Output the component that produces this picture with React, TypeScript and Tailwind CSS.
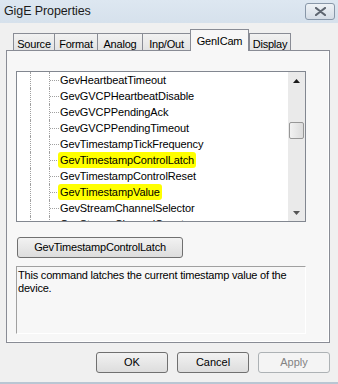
import React from "react";

const rows: { t: string; hl?: boolean }[] = [
  { t: "GevHeartbeatTimeout" },
  { t: "GevGVCPHeartbeatDisable" },
  { t: "GevGVCPPendingAck" },
  { t: "GevGVCPPendingTimeout" },
  { t: "GevTimestampTickFrequency" },
  { t: "GevTimestampControlLatch", hl: true },
  { t: "GevTimestampControlReset" },
  { t: "GevTimestampValue", hl: true },
  { t: "GevStreamChannelSelector" },
  { t: "GevStreamChannelCount" },
];

const tabs = [
  { t: "Source", w: "w-[41px]" },
  { t: "Format", w: "w-[43px]" },
  { t: "Analog", w: "w-[45px]" },
  { t: "Inp/Out", w: "w-[48px]" },
  { t: "GenICam", w: "w-[59px]", active: true },
  { t: "Display", w: "w-[42px]" },
];

export default function App() {
  return (
    <div
      className="w-[338px] h-[384px] bg-[#f0f0f0] flex flex-col overflow-hidden text-[11px] text-black"
      style={{ fontFamily: '"Liberation Sans", Arial, sans-serif' }}
    >
      {/* Title bar */}
      <div className="h-[23px] shrink-0 bg-gradient-to-b from-[#dde7f1] to-[#d6e1ec] flex items-center justify-between pl-[4px] pr-[3px]">
        <span className="text-[12.5px] text-[#1b1b1b] tracking-[-0.1px]">GigE Properties</span>
        <div className="w-[30px] h-[17px] rounded-[3px] border border-[#8897a8] bg-gradient-to-b from-[#eef2f6] to-[#d5dde6] flex items-center justify-center">
          <svg width="11" height="9" viewBox="0 0 11 9">
            <path d="M1 1 L10 8 M10 1 L1 8" stroke="#5e6670" strokeWidth="2.2" strokeLinecap="round" />
          </svg>
        </div>
      </div>

      {/* Tabs */}
      <div className="h-[27px] shrink-0 flex items-end pl-[13px] pt-[6px]">
        {tabs.map((tb) =>
          tb.active ? (
            <div
              key={tb.t}
              className={`${tb.w} h-[22px] -mb-[1px] relative z-10 bg-[#f7f7f7] border border-b-0 border-[#898c95] flex items-start justify-center pt-[3px]`}
            >
              <span className="tracking-[-0.2px]">{tb.t}</span>
            </div>
          ) : (
            <div
              key={tb.t}
              className={`${tb.w} h-[17px] bg-gradient-to-b from-[#f2f2f2] to-[#e3e3e3] border border-b-0 border-r-0 border-[#898c95] last:border-r flex items-start justify-center pt-[2px]`}
            >
              <span className="tracking-[-0.2px]">{tb.t}</span>
            </div>
          )
        )}
      </div>

      {/* Panel */}
      <div className="mx-[6px] w-[324px] h-[293px] shrink-0 border border-[#898c95] bg-[#f7f7f7] flex flex-col">
        <div className="flex-1 border-r border-b border-white flex flex-col pl-[9px] pt-[20px]">
          {/* Tree */}
          <div className="w-[290px] h-[151px] border border-[#828790] bg-white flex overflow-hidden">
            <div className="flex-1 flex flex-col overflow-hidden">
              {rows.map((r) => (
                <div key={r.t} className="h-[16px] shrink-0 flex items-stretch">
                  <div className="w-[13px] shrink-0" />
                  <div className="w-[19px] shrink-0 border-l border-dotted border-[#a0a0a0]" />
                  <div className="w-[10px] shrink-0 border-l border-dotted border-[#a0a0a0] flex items-center">
                    <div className="w-[9px] border-t border-dotted border-[#a0a0a0]" />
                  </div>
                  <div className="flex items-center">
                    <span
                      className={`text-[11px] tracking-[-0.1px] leading-[16px] whitespace-nowrap ${
                        r.hl ? "bg-[#ffff00] rounded-[3px] px-[2px] -ml-[1px]" : "pl-[1px]"
                      }`}
                    >
                      {r.t}
                    </span>
                  </div>
                </div>
              ))}
            </div>
            {/* Scrollbar */}
            <div className="w-[17px] shrink-0 bg-[#eaeaea] flex flex-col items-center">
              <div className="h-[17px] w-full flex items-center justify-center">
                <svg width="7" height="4" viewBox="0 0 7 4">
                  <path d="M3.5 0 L7 4 L0 4 Z" fill="#1a1a1a" />
                </svg>
              </div>
              <div className="h-[33px]" />
              <div className="w-[15px] h-[17px] rounded-[2px] border border-[#979797] bg-gradient-to-r from-[#f2f2f2] to-[#dcdcdc]" />
              <div className="flex-1" />
              <div className="h-[17px] w-full flex items-center justify-center">
                <svg width="7" height="4" viewBox="0 0 7 4">
                  <path d="M0 0 L7 0 L3.5 4 Z" fill="#555" />
                </svg>
              </div>
            </div>
          </div>

          {/* Command button */}
          <div className="mt-[15px] ml-[1px] w-[166px] h-[21px] rounded-[3px] border border-[#707070] bg-gradient-to-b from-[#f2f2f2] to-[#dddddd] flex items-center justify-center">
            <span className="tracking-[-0.2px]">GevTimestampControlLatch</span>
          </div>

          {/* Description */}
          <div className="mt-[8px] w-[290px] h-[68px] border border-[#a0a0a0] border-r-white border-b-white pl-[1px] pt-[2px] leading-[13px] tracking-[-0.2px]">
            This command latches the current timestamp value of the
            <br />
            device.
          </div>
        </div>
      </div>

      {/* Bottom buttons */}
      <div className="mt-[9px] flex justify-end gap-[9px] pr-[8px]">
        <div className="w-[72px] h-[21px] rounded-[3px] border border-[#707070] bg-gradient-to-b from-[#f2f2f2] to-[#dddddd] flex items-center justify-center">
          OK
        </div>
        <div className="w-[72px] h-[21px] rounded-[3px] border border-[#707070] bg-gradient-to-b from-[#f2f2f2] to-[#dddddd] flex items-center justify-center">
          Cancel
        </div>
        <div className="w-[72px] h-[21px] rounded-[3px] border border-[#adb2b5] bg-[#f4f4f4] text-[#838383] flex items-center justify-center">
          Apply
        </div>
      </div>
      <div className="flex-1" />
      <div className="h-[2px] bg-[#b9c6d3]" />
    </div>
  );
}
